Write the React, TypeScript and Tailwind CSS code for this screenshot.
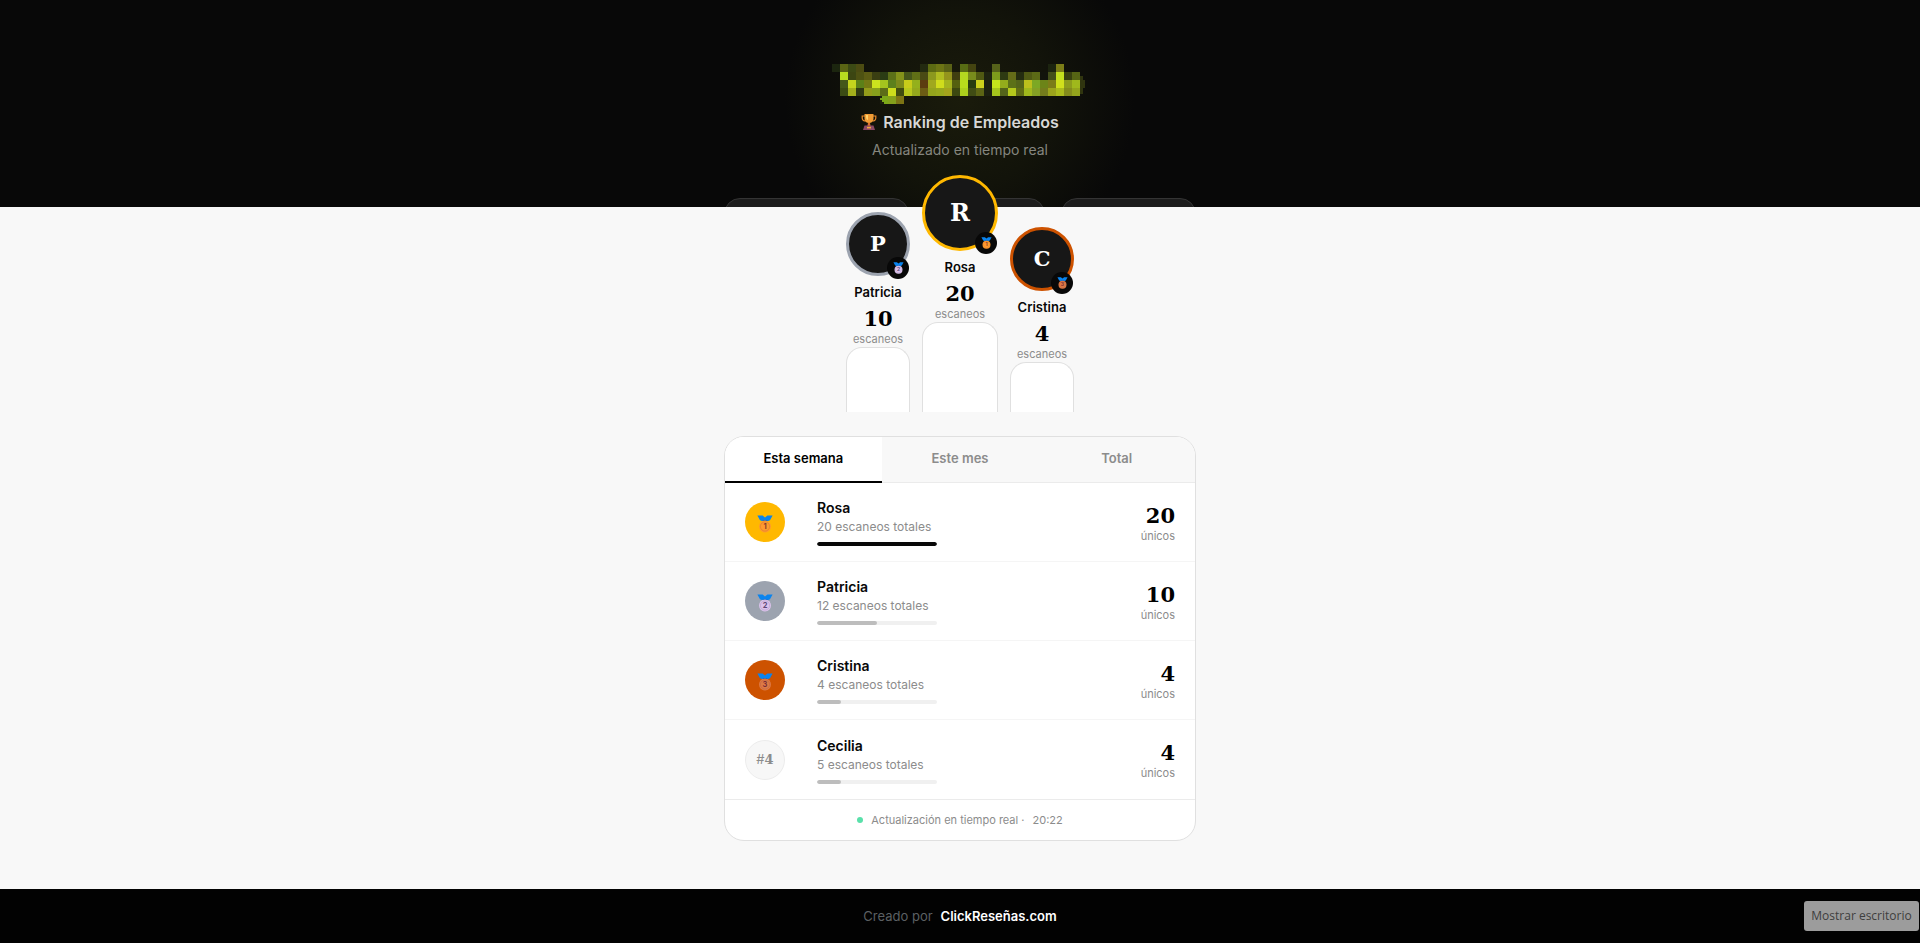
import React, { useState } from 'react'

// Mosaic colours, one string per row, cells are 8x8
const mosaic = [
  '1c260f 5a6414 3c4a14 4c4c12 - - - - - - - 232a10 5c6a12 6c7414 5a6216 - 586c14 444410 - - 56621a - - - - - - 1c240f 7c7e18 - -',
  '- b8dc20 3c4612 4e5212 5c5c14 3a3e12 2a3c14 5c7018 84921a 46561a 606e16 4a4a14 8c981e b0bc20 94941c 403e10 b4d820 788c1c 505a12 1e2410 7e9c1c 2e3a12 646c18 242c10 505a14 5c6a16 12140c 44501a c4e01e 384010 566414',
  '- 44581a c4d41e 5c8018 747a14 cce41e a4c41e 5c801c 7c8a1c c8cc1a 94b01c 5c3c10 a0a81e d0dc1c a4b41e 54600f b8dc1c 283c10 ccd01c 1c2010 c4e41c 94ac1c 5c7018 54641a bcc01c 7ca824 6c8418 7c7c18 d0e01c 8c9c1c a0b81c',
  '- 3c4c14 a4b01c 303a12 949c1a 88a01c 5c6c18 ccdc1c 404c10 b8c81c 94a81c 6c5c14 94a41c 98a81c a4a41c 3c4810 acd01c 404c14 5c6414 1c2010 a4c41c 54641a b4c81c 606c14 a0b81c 84a024 747c1c 9ca41c acbc1c 848c1c 94a41c',
  '- - - - - - 7ca818 84a01c 7c7414',
]

const employees = [
  { name: 'Rosa', unique: 20, total: 20, place: 1 },
  { name: 'Patricia', unique: 10, total: 12, place: 2 },
  { name: 'Cristina', unique: 4, total: 4, place: 3 },
  { name: 'Cecilia', unique: 4, total: 5, place: 4 },
]

const podium = [
  { name: 'Patricia', score: 10, place: 2, avatar: 'size-16 border-[#9ca3af] text-[21px]', bar: 'w-16 h-[65px]' },
  { name: 'Rosa', score: 20, place: 1, avatar: 'size-[76px] border-[#ffb800] text-[24px]', bar: 'w-[76px] h-[90px]' },
  { name: 'Cristina', score: 4, place: 3, avatar: 'size-16 border-[#cd5200] text-[21px]', bar: 'w-16 h-[50px]' },
]

const medalFill = ['#ff9a2e', '#dcc3ec', '#dd7a45']
const medalInk = ['#8a3b2a', '#5f4a78', '#7d2f35']
const circleColor = ['bg-[#ffb800]', 'bg-[#9ca3af]', 'bg-[#cd5200]']
const tabs = ['Esta semana', 'Este mes', 'Total']

const Logo: React.FC = () => {
  return (
    <svg width="256" height="40" viewBox="0 0 256 40" shapeRendering="crispEdges" role="img" aria-label="Logo">
      {mosaic.map((row, y) =>
        row.split(' ').map((c, x) =>
          c === '-' ? null : <rect key={x + '-' + y} x={x * 8} y={y * 8} width="8" height="8" fill={'#' + c} />
        )
      )}
      <path d="M248 12h3v4h2v8h-2v6h-3z" fill="#30350f" />
      <path d="M48 32h2v2h-2zM48 36h2v4h-2zM50 38h2v2h-2z" fill="#1c200d" />
    </svg>
  )
}

const Trophy: React.FC = () => {
  return (
    <svg className="size-4" viewBox="0 0 16 16" aria-hidden="true">
      <path d="M4 2H1.200v2C1.200 6 2.600 7 4.600 7M12 2h2.800v2c0 2-1.400 3-3.400 3" fill="none" stroke="#e88a2c" strokeWidth="1.200" />
      <path d="M3.500 0h9v4.500C12.500 7.500 10.500 9 8 9S3.500 7.500 3.500 4.500z" fill="#f09c35" />
      <path d="M5 1h2v5C5.500 5.500 5 4 5 3z" fill="#ffd36b" />
      <path d="M7 9h2l.6 3H6.400z" fill="#dd6f2c" />
      <path d="M3.500 11.500h9l1.500 4.500H2z" fill="#8b4863" />
      <rect x="6" y="12.800" width="4" height="1.600" fill="#f3a93c" />
    </svg>
  )
}

const Medal: React.FC<{ place: number; className: string }> = ({ place, className }) => {
  return (
    <svg className={className} viewBox="0 0 16 18" role="img" aria-label={'Puesto ' + place}>
      <path d="M.4.500h5.200L8 2.400 10.400.500h5.200L13 5.200 10 6.500H6L3 5.200z" fill="#0a84ee" />
      <path d="M5.500 5h5l-1 2h-3z" fill="#0566c8" />
      <circle cx="8" cy="11.500" r="6" fill={medalFill[place - 1]} />
      <circle cx="8" cy="11.500" r="4.600" fill="none" stroke={medalInk[place - 1]} strokeOpacity=".25" strokeWidth=".7" />
      <text x="8" y="14.200" textAnchor="middle" fontFamily="Inter, sans-serif" fontSize="7.500" fontWeight="700" fill={medalInk[place - 1]}>
        {place}
      </text>
    </svg>
  )
}

const Hero: React.FC = () => {
  return (
    <header className="h-[207px] overflow-hidden bg-[#080808] bg-[radial-gradient(circle_at_50%_100px,#1a1b0b_0px,#12130a_90px,#080808_175px)] px-6 pt-16">
      <div className="flex flex-col items-center">
        <h1 className="h-10">
          <Logo />
        </h1>
        <p className="mt-1.5 flex items-center gap-1.5 text-[16px] leading-6 font-semibold text-[#d8d8d6]">
          <Trophy />
          Ranking de Empleados
        </p>
        <p className="mt-1 text-[14px] leading-6 text-[#85867f]">Actualizado en tiempo real</p>
      </div>
      <div className="mx-auto mt-9 grid max-w-[472px] grid-cols-[185fr_120fr_135fr] gap-4">
        <div className="h-20 rounded-2xl border border-[#343434] bg-[#1d1d1d]" />
        <div className="h-20 rounded-2xl border border-[#343434] bg-[#1d1d1d]" />
        <div className="h-20 rounded-2xl border border-[#343434] bg-[#1d1d1d]" />
      </div>
    </header>
  )
}

const Podium: React.FC = () => {
  return (
    <section className="relative -mt-8 flex items-end justify-center gap-3">
      {podium.map((p) => (
        <div key={p.name} className="flex flex-col items-center">
          <div className={'relative flex items-center justify-center rounded-full border-3 bg-[#171717] font-["DejaVu_Serif",serif] font-bold text-white ' + p.avatar}>
            {p.name[0]}
            <span className="absolute -right-0.5 -bottom-1.5 flex size-[22px] items-center justify-center rounded-full bg-[#080808]">
              <Medal place={p.place} className="h-3 w-[11px]" />
            </span>
          </div>
          <div className="mt-1.5 text-[13px] leading-5 font-semibold text-[#080808]">{p.name}</div>
          <div className='mt-1 font-["DejaVu_Serif",serif] text-[21px] leading-[26px] font-bold text-black'>{p.score}</div>
          <div className="text-[11px] leading-[15px] text-[#8c8c8c]">escaneos</div>
          <div className={'rounded-t-2xl border border-b-0 border-[#e0e0e0] bg-white ' + p.bar} />
        </div>
      ))}
    </section>
  )
}

const Ranking: React.FC = () => {
  const [tab, setTab] = useState(0)
  return (
    <section className="mx-auto mt-6 w-full max-w-[472px] overflow-hidden rounded-[20px] border border-[#e0e0e0] bg-white">
      <div className="grid grid-cols-3 bg-[#f8f8f8]">
        {tabs.map((t, i) => (
          <button
            key={t}
            type="button"
            onClick={() => setTab(i)}
            className={
              tab === i
                ? 'h-[46px] bg-white pb-1 text-[13px] leading-5 font-semibold text-black shadow-[inset_0_-2px_0_#000]'
                : 'h-[46px] pb-1 text-[13px] leading-5 font-semibold text-[#8c8c8c] shadow-[inset_0_-1px_0_#ebebeb]'
            }
          >
            {t}
          </button>
        ))}
      </div>
      <ol>
        {employees.map((e) => (
          <li key={e.name} className="grid h-[79px] grid-cols-[56px_1fr_auto] items-center gap-4 border-b border-[#f5f5f5] px-5 last:border-b-0">
            {e.place < 4 ? (
              <div className={'flex size-10 items-center justify-center rounded-full ' + circleColor[e.place - 1]}>
                <Medal place={e.place} className="mt-1 h-[18px] w-4" />
              </div>
            ) : (
              <div className='flex size-10 items-center justify-center rounded-full border border-[#ececec] bg-[#f7f7f7] font-["DejaVu_Serif",serif] text-[13px] text-[#8c8c8c]'>
                <span className="font-[Inter,sans-serif]">#</span>
                <b>{e.place}</b>
              </div>
            )}
            <div>
              <div className="text-[14px] leading-5 font-semibold text-[#080808]">{e.name}</div>
              <div className="text-[12px] leading-[18px] text-[#8c8c8c]">{e.total} escaneos totales</div>
              <div className="mt-1.5 h-1 w-[120px] overflow-hidden rounded-full bg-[#f0f0f0]">
                <div
                  className={e.place === 1 ? 'h-1 rounded-full bg-[#080808]' : 'h-1 rounded-full bg-[#bdbdbd]'}
                  style={{ width: (e.unique / 20) * 100 + '%' }}
                />
              </div>
            </div>
            <div className="pt-0.5 text-right">
              <div className='font-["DejaVu_Serif",serif] text-[21px] leading-[26px] font-bold text-black'>{e.unique}</div>
              <div className="text-[11px] leading-[15px] text-[#8c8c8c]">únicos</div>
            </div>
          </li>
        ))}
      </ol>
      <div className="flex h-[41px] items-center justify-center border-t border-[#ebebeb] text-[11px] leading-5 text-[#8c8c8c]">
        <span className="mr-2 size-1.5 rounded-full bg-[#59e0aa]" />
        Actualización en tiempo real ·<time className="ml-2">20:22</time>
      </div>
    </section>
  )
}

const App: React.FC = () => {
  return (
    <div className="flex min-h-screen flex-col bg-[#f8f8f8] font-[Inter,sans-serif]">
      <Hero />
      <main className="mb-12 grow">
        <Podium />
        <Ranking />
      </main>
      <footer className="flex h-[54px] items-center justify-center gap-2 bg-[#020202] text-[13px] leading-5 text-[#5c6063]">
        Creado por
        <a href="#" className="font-semibold text-white">
          ClickReseñas.com
        </a>
      </footer>
      <div role="tooltip" className='fixed right-px bottom-3 flex h-[30px] w-[115px] items-center justify-center rounded-[3px] bg-[#9c9c9c] font-["Open_Sans",sans-serif] text-[12px] whitespace-nowrap text-[#3e3e3e]'>
        Mostrar escritorio
      </div>
    </div>
  )
}
export default App
